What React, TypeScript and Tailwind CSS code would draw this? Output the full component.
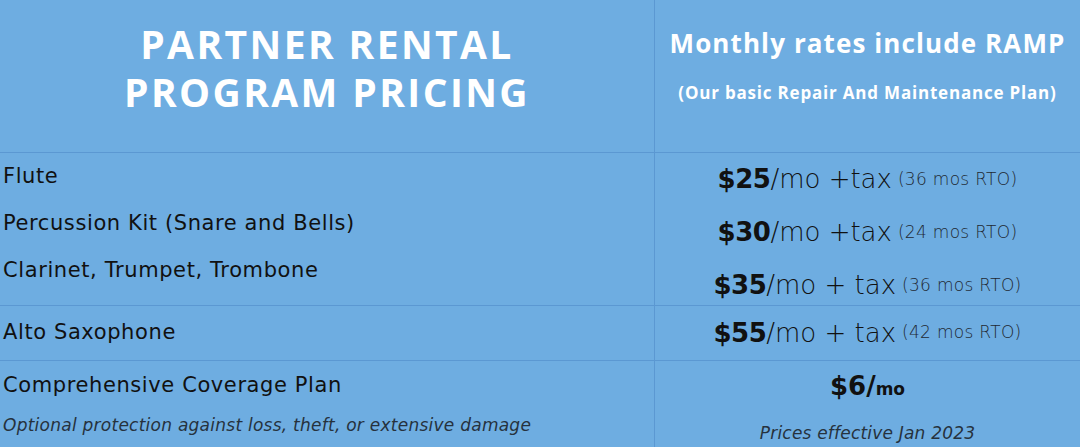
import React from "react";

const body = { fontFamily: '"DejaVu Sans", "Liberation Sans", sans-serif' };
const head = { fontFamily: '"Open Sans", "Liberation Sans", sans-serif' };

function Price({ amount, rest, rto }: { amount: string; rest: string; rto: string }) {
  return (
    <div className="h-[53px] flex items-center justify-center text-[#111] whitespace-nowrap">
      <span className="text-[26px] font-bold tracking-[-0.5px]">{amount}</span>
      <span className="text-[26px] font-light">{rest}</span>
      <span className="text-[17px] text-[#1f2933] ml-[6px] font-light tracking-[0.3px]">{rto}</span>
    </div>
  );
}

export default function App() {
  const items = ["Flute", "Percussion Kit (Snare and Bells)", "Clarinet, Trumpet, Trombone"];

  return (
    <div className="w-[1080px] h-[447px] bg-[#6eade1] overflow-hidden" style={body}>
      {/* header */}
      <div className="grid grid-cols-[655px_1fr] h-[153px] border-b border-[#5b98d2]">
        <div className="border-r border-[#5b98d2] flex flex-col items-center pt-[20px]" style={head}>
          <div className="text-white text-[39px] font-bold leading-[48px] tracking-[2.4px] text-center">
            PARTNER RENTAL
            <br />
            PROGRAM PRICING
          </div>
        </div>
        <div className="flex flex-col items-center text-white pt-[25px]" style={head}>
          <div className="text-[26px] font-bold leading-[36px] tracking-[1.1px]">Monthly rates include RAMP</div>
          <div className="text-[17px] font-bold leading-[24px] mt-[20px] tracking-[0.8px]">
            (Our basic Repair And Maintenance Plan)
          </div>
        </div>
      </div>

      {/* instruments */}
      <div className="grid grid-cols-[655px_1fr] h-[153px] border-b border-[#5b98d2]">
        <div className="border-r border-[#5b98d2] pl-[3px] text-[#111] text-[21px] tracking-[0.6px]">
          {items.map((i) => (
            <div key={i} className="h-[47px] flex items-center">
              {i}
            </div>
          ))}
        </div>
        <div>
          <Price amount="$25" rest="/mo +tax" rto="(36 mos RTO)" />
          <Price amount="$30" rest="/mo +tax" rto="(24 mos RTO)" />
          <Price amount="$35" rest="/mo + tax" rto="(36 mos RTO)" />
        </div>
      </div>

      {/* alto */}
      <div className="grid grid-cols-[655px_1fr] h-[55px] border-b border-[#5b98d2]">
        <div className="border-r border-[#5b98d2] pl-[3px] flex items-center text-[#111] text-[21px] tracking-[0.6px]">
          Alto Saxophone
        </div>
        <div className="flex items-center justify-center">
          <Price amount="$55" rest="/mo + tax" rto="(42 mos RTO)" />
        </div>
      </div>

      {/* coverage */}
      <div className="grid grid-cols-[655px_1fr] h-[86px]">
        <div className="border-r border-[#5b98d2] pl-[3px] pt-[10px] text-[#111]">
          <div className="text-[21px] leading-[28px] tracking-[0.6px]">Comprehensive Coverage Plan</div>
          <div className="text-[17px] italic font-light text-[#26323d] mt-[14px] tracking-[0.25px]">
            Optional protection against loss, theft, or extensive damage
          </div>
        </div>
        <div className="flex flex-col items-center pt-[10px] text-[#111]">
          <div className="leading-[30px] whitespace-nowrap">
            <span className="text-[26px] font-bold">$6/</span>
            <span className="text-[17px] font-bold">mo</span>
          </div>
          <div className="text-[17px] italic text-[#26323d] mt-[16px] tracking-[0.2px]">Prices effective Jan 2023</div>
        </div>
      </div>
    </div>
  );
}
